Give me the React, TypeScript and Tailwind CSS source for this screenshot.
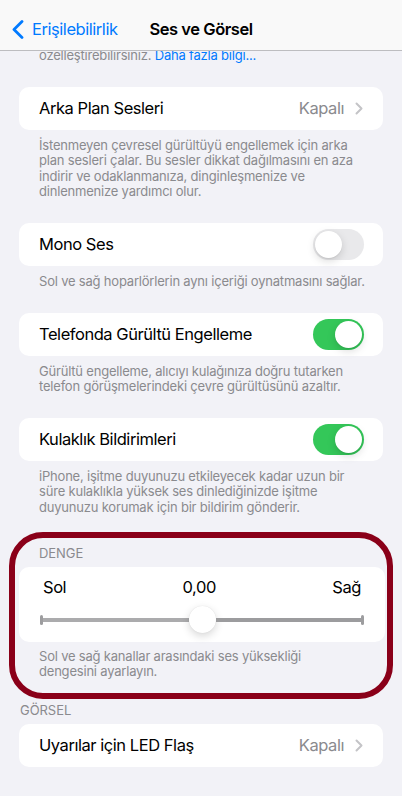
import { ReactNode } from 'react';

const footNote = 'pl-[39px] pr-[16px] text-[13px] leading-[15.6px] text-[#8a8a8e] tracking-[-0.2px]';
const body = 'text-[16.5px] leading-[22px] tracking-[-0.45px]';

export default function App() {
  return (
    <div className="relative h-[796px] w-full overflow-hidden bg-[#f2f2f7] font-[family-name:Inter,'Noto_Sans',sans-serif] text-black antialiased">
      {/* Navigation bar */}
      <header className="absolute inset-x-0 top-0 z-10 h-[51px] border-b border-[#bdbdc0] bg-[#f9f9f9]">
        <div className="grid h-full grid-cols-[1fr_auto_1fr] items-start pt-[18px]">
          <button className="flex h-[22px] items-center gap-[8px] pl-[12px] text-[#007aff]">
            <svg width="12" height="19" viewBox="0 0 12 19" fill="none">
              <path d="M10 1.5L2 9.5l8 8" stroke="currentColor" strokeWidth="2.8" strokeLinecap="round" strokeLinejoin="round" />
            </svg>
            <span className={body}>Erişilebilirlik</span>
          </button>
          <h1 className={`h-[22px] font-semibold ${body}`}>Ses ve Görsel</h1>
          <div />
        </div>
      </header>

      <main className="pt-[48px]">
        <p className={footNote}>
          özelleştirebilirsiniz. <span className="text-[#007aff]">Daha fazla bilgi...</span>
        </p>

        <Card className="mt-[23px]">
          <RowLabel>Arka Plan Sesleri</RowLabel>
          <Disclosure value="Kapalı" />
        </Card>
        <p className={`${footNote} mt-[8px]`}>
          İstenmeyen çevresel gürültüyü engellemek için arka
          <br />
          plan sesleri çalar. Bu sesler dikkat dağılmasını en aza
          <br />
          indirir ve odaklanmanıza, dinginleşmenize ve
          <br />
          dinlenmenize yardımcı olur.
        </p>

        <Card className="mt-[23px]">
          <RowLabel>Mono Ses</RowLabel>
          <Toggle on={false} />
        </Card>
        <p className={`${footNote} mt-[8px]`}>Sol ve sağ hoparlörlerin aynı içeriği oynatmasını sağlar.</p>

        <Card className="mt-[23px]">
          <RowLabel>Telefonda Gürültü Engelleme</RowLabel>
          <Toggle on />
        </Card>
        <p className={`${footNote} mt-[8px]`}>
          Gürültü engelleme, alıcıyı kulağınıza doğru tutarken
          <br />
          telefon görüşmelerindeki çevre gürültüsünü azaltır.
        </p>

        <Card className="mt-[23px]">
          <RowLabel>Kulaklık Bildirimleri</RowLabel>
          <Toggle on />
        </Card>
        <p className={`${footNote} mt-[8px]`}>
          iPhone, işitme duyunuzu etkileyecek kadar uzun bir
          <br />
          süre kulaklıkla yüksek ses dinlediğinizde işitme
          <br />
          duyunuzu korumak için bir bildirim gönderir.
        </p>

        {/* Balance group, ringed */}
        <section className="mx-[9px] mt-[16px] rounded-[34px] border-[6px] border-[#8a0019] pt-[7px] pb-[13px] pl-[4px] pr-[2px]">
          <SectionTitle>Denge</SectionTitle>
          <div className="mt-[6px] h-[75px] rounded-[10px] bg-white px-[21px] pt-[9px]">
            <div className={`flex items-center justify-between px-[3px] ${body}`}>
              <span>Sol</span>
              <span>0,00</span>
              <span>Sağ</span>
            </div>
            <BalanceSlider />
          </div>
          <p className="mt-[7px] pl-[20px] pr-[8px] text-[13px] leading-[15.6px] tracking-[-0.2px] text-[#8a8a8e]">
            Sol ve sağ kanallar arasındaki ses yüksekliği
            <br />
            dengesini ayarlayın.
          </p>
        </section>

        <div className="mt-[3px]">
          <SectionTitle>Görsel</SectionTitle>
        </div>
        <Card className="mt-[6px]">
          <RowLabel>Uyarılar için LED Flaş</RowLabel>
          <Disclosure value="Kapalı" />
        </Card>
      </main>
    </div>
  );
}

function Card({ className = '', children }: { className?: string; children: ReactNode }) {
  return (
    <div className={`mx-[19px] flex h-[43px] items-center justify-between rounded-[10px] bg-white pl-[20px] pr-[19px] ${className}`}>
      {children}
    </div>
  );
}

function RowLabel({ children }: { children: ReactNode }) {
  return <span className={body}>{children}</span>;
}

function SectionTitle({ children }: { children: ReactNode }) {
  return (
    <h2 className="pl-[20px] text-[13px] leading-[16px] uppercase tracking-[-0.05px] text-[#8a8a8e]">{children}</h2>
  );
}

function Disclosure({ value }: { value: string }) {
  return (
    <div className="flex items-center gap-[11px] pr-[1px]">
      <span className={`${body} text-[#8a8a8e]`}>{value}</span>
      <svg width="8" height="13" viewBox="0 0 8 13" fill="none">
        <path d="M1.5 1.5l5 5-5 5" stroke="#c4c4c7" strokeWidth="2" strokeLinecap="round" strokeLinejoin="round" />
      </svg>
    </div>
  );
}

function Toggle({ on }: { on: boolean }) {
  return (
    <div
      className={`flex h-[31px] w-[51px] items-center rounded-full p-[2px] ${
        on ? 'justify-end bg-[#34c759]' : 'justify-start bg-[#e9e9eb]'
      }`}
    >
      <div className="h-[27px] w-[27px] rounded-full bg-white shadow-[0_3px_8px_rgba(0,0,0,0.15),0_1px_1px_rgba(0,0,0,0.06)]" />
    </div>
  );
}

function BalanceSlider() {
  return (
    <div className="mt-[8px] flex h-[28px] items-center">
      <div className="h-[10px] w-[3px] rounded-full bg-[#9d9d9f]" />
      <div className="h-[4px] flex-1 bg-[#ababad]" />
      <div className="h-[27px] w-[27px] rounded-full bg-white shadow-[0_3px_8px_rgba(0,0,0,0.16),0_0_1px_rgba(0,0,0,0.12)]" />
      <div className="h-[4px] flex-1 bg-[#9c9c9e]" />
      <div className="h-[10px] w-[3px] rounded-full bg-[#9d9d9f]" />
    </div>
  );
}
